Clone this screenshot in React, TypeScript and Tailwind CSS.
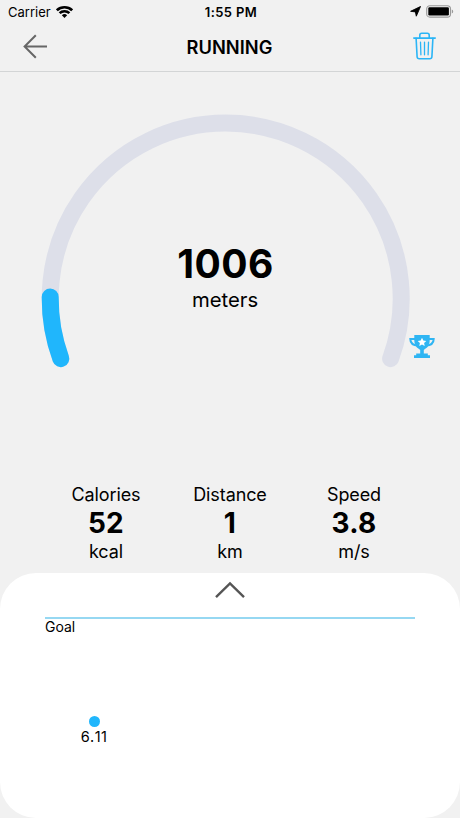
import React from "react";

const stats = [
  { label: "Calories", value: "52", unit: "kcal" },
  { label: "Distance", value: "1", unit: "km" },
  { label: "Speed", value: "3.8", unit: "m/s" },
];

function StatusBar() {
  return (
    <div className="grid h-6 grid-cols-3 items-center pl-2 pr-[6px] text-[13px] leading-6">
      <div className="flex items-center gap-[5px]">
        <span>Carrier</span>
        <svg width="17" height="12" viewBox="0 0 16 12" fill="none" stroke="#000" strokeWidth="2.5" preserveAspectRatio="none">
          <path d="M0.8 4.3a10.2 10.2 0 0 1 14.4 0" />
          <path d="M3.4 7.1a6.5 6.5 0 0 1 9.2 0" />
          <path d="M8 11.9 5.5 9.3a3.6 3.6 0 0 1 5 0z" fill="#000" stroke="none" />
        </svg>
      </div>
      <div className="text-center font-semibold tracking-[0.4px]">1:55 PM</div>
      <div className="flex items-center justify-end gap-[5px]">
        <svg className="-mt-px" width="11" height="11" viewBox="0 0 11 11">
          <path d="M10.5 0.5 6.3 10.2 5.4 5.9 0.6 5.3z" fill="#000" stroke="#000" strokeWidth="0.9" strokeLinejoin="round" />
        </svg>
        <svg className="-mt-px" width="28" height="13" viewBox="0 0 28 13">
          <rect x="0.7" y="0.7" width="23.8" height="11.4" rx="3.2" fill="none" stroke="#999" strokeWidth="1.1" />
          <rect x="2.3" y="2.3" width="20.6" height="8.2" rx="1.2" fill="#000" />
          <path d="M25.8 4.4v4c1.9-.7 1.9-3.3 0-4z" fill="#999" />
        </svg>
      </div>
    </div>
  );
}

function Header() {
  return (
    <header className="grid h-12 grid-cols-3 items-center border-b border-[#d3d5d6] pb-[2px] pl-[23px] pr-6">
      <svg width="25" height="25" viewBox="0 0 25 25" fill="none" stroke="#666" strokeWidth="2">
        <path d="M12.8 1.2 1.6 12.5l11.2 11.3M1.6 12.5H24" />
      </svg>
      <h1 className="pt-[2px] text-center text-[18.3px] font-semibold">RUNNING</h1>
      <svg className="-mt-[2px] justify-self-end" width="23" height="28" viewBox="0 0 23 28" fill="none" stroke="#2bb5f6" strokeWidth="1.6" strokeLinecap="round" strokeLinejoin="round">
        <path d="M0.8 6.1h21.4" />
        <path d="M6.8 5.7V3.2c0-1.1.8-1.9 1.9-1.9h5.6c1.1 0 1.9.8 1.9 1.9v2.5" />
        <path d="m3.1 6.3 1 18.4c.1 1.2 1 2 2.1 2h10.6c1.1 0 2-.8 2.1-2l1-18.4" />
        <path d="m7.5 10.2.4 12.6M11.5 10.2v12.6M15.5 10.2l-.4 12.6" strokeWidth="1.3" />
      </svg>
    </header>
  );
}

function Gauge() {
  return (
    <section className="grid h-[411px]">
      <svg className="col-start-1 row-start-1" width="460" height="410" viewBox="0 72 460 410" fill="none">
        <path d="M60.8 358.6A175.5 175.5 0 1 1 390.6 358.6" stroke="#dddfe9" strokeWidth="17" strokeLinecap="round" />
        <path d="M60.8 358.6A175.5 175.5 0 0 1 50.2 297" stroke="#20b6fc" strokeWidth="17" strokeLinecap="round" />
        {/* goal trophy */}
        <g transform="translate(409 335)">
          <path d="M6.5 4H1.3c0 3.4 2.4 6.4 8 6.8M19.500 4h5.200c0 3.400-2.400 6.400-8 6.800" stroke="#2fb5f3" strokeWidth="2" />
          <path d="M5.300 0h15.400v5.500c0 3.800-1.800 6.900-4.400 8.300l-1.500 1.200v3.600h4v1.600h2.200V23H5v-2.800h2.200v-1.600h4V15l-1.500-1.200c-2.600-1.400-4.400-4.500-4.400-8.300z" fill="#2fb5f3" />
          <path d="m13 2.800 1.300 2.700 3 .4-2.200 2.100.6 3-2.700-1.500-2.700 1.500.6-3-2.200-2.100 3-.4z" fill="#fff" />
        </g>
      </svg>
      <div className="col-start-1 row-start-1 pr-[9px] pt-[168px] text-center">
        <div className="text-[39px] font-bold leading-[48px] tracking-[0.4px]">1006</div>
        <div className="pr-px text-[20.3px] leading-[24px]">meters</div>
      </div>
    </section>
  );
}

export default function App() {
  return (
    <main className="flex h-[818px] w-[460px] flex-col overflow-hidden bg-[#f1f1f1] font-['Inter',sans-serif] text-black">
      <StatusBar />
      <Header />
      <Gauge />
      <section className="grid h-[90px] grid-cols-3 px-[44px] text-center">
        {stats.map((s) => (
          <div key={s.label}>
            <div className="text-[18px] leading-6 tracking-[-0.1px]">{s.label}</div>
            <div className="text-[28px] font-bold leading-[33px] tracking-[0.3px]">{s.value}</div>
            <div className="text-[18px] leading-6 tracking-[-0.1px]">{s.unit}</div>
          </div>
        ))}
      </section>
      <section className="flex h-[245px] flex-col rounded-[36px] bg-white px-[45px] pt-2">
        <svg className="self-center" width="30" height="18" viewBox="0 0 30 18" fill="none" stroke="#555" strokeWidth="2.4">
          <path d="M1 16.2 15 2.4l14 13.8" />
        </svg>
        <div className="mt-[18px] w-[370px] border-t-2 border-[#96d8f2] text-[14px] leading-[16px]">Goal</div>
        <div className="ml-[29px] mt-[81px] flex w-10 flex-col items-center">
          <div className="h-[11px] w-[11px] rounded-full bg-[#20b6fc]" />
          <div className="text-[14.5px] leading-[19px] tracking-[0.4px] [font-kerning:none]">6.11</div>
        </div>
      </section>
    </main>
  );
}
